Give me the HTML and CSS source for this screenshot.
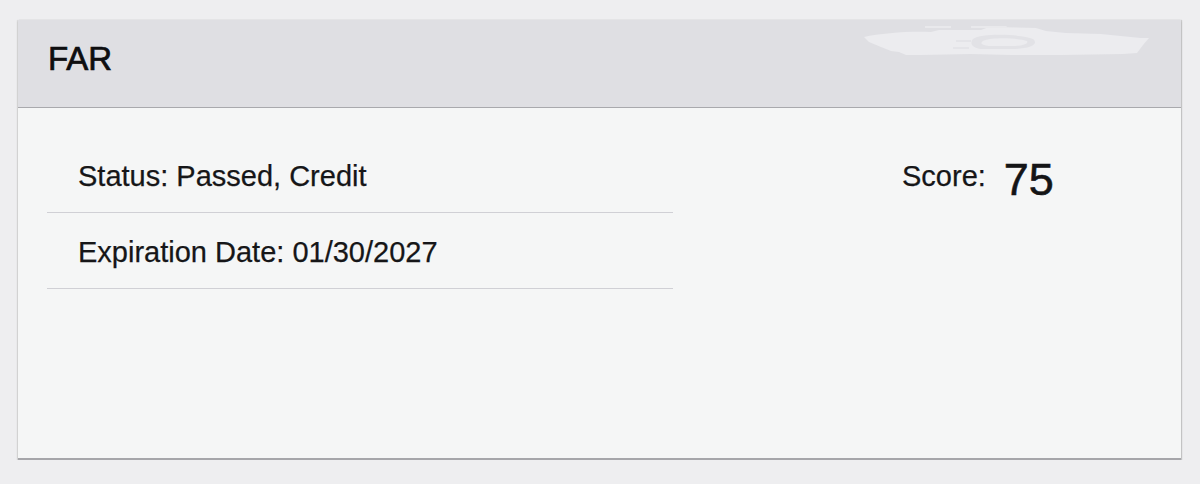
FILE: index.html
```html
<!DOCTYPE html>
<html lang="en">
<head>
<meta charset="utf-8">
<title>FAR</title>
<link rel="stylesheet" href="styles.css">
</head>
<body>
<div class="page">
  <section class="card">
    <header class="card-header">
      <h2 class="card-title">FAR</h2>
      <svg class="smudge" width="300" height="40" viewBox="0 0 300 40" aria-hidden="true">
        <path d="M3 12 C20 8 50 6 70 7 L78 5 L120 5 L128 2 L175 3 L185 6 L205 8 L240 9 L280 13 L288 13 L282 20 L276 28 L262 29 L200 30 L150 30 L110 29 L60 30 L45 30 L38 27 L30 26 L20 22 L8 17 Z" fill="#ececef"/>
        <path d="M64 1 L90 1 L90 3 L64 3 Z" fill="#e9e9ec"/>
        <path d="M110 1 L145 1 L148 3 L110 3 Z" fill="#e9e9ec"/>
        <path d="M112 14 C120 8 160 9 172 14 C178 19 170 24 150 24 L120 24 C112 23 108 19 112 14 Z" fill="#e2e2e6"/>
        <path d="M122 16 C130 12 158 13 166 16 C168 19 160 21 150 21 L128 21 C120 20 119 18 122 16 Z" fill="#ececef"/>
        <path d="M95 15 L110 15 L110 17 L95 17 Z" fill="#e4e4e8"/>
        <path d="M92 22 L108 22 L108 24 L92 24 Z" fill="#e4e4e8"/>
      </svg>
    </header>
    <div class="card-body">
      <ul class="details">
        <li class="detail-row">Status: Passed, Credit</li>
        <li class="detail-row">Expiration Date: 01/30/2027</li>
      </ul>
      <div class="score">
        <span class="score-label">Score:</span>
        <span class="score-value">75</span>
      </div>
    </div>
  </section>
</div>
</body>
</html>
```

FILE: styles.css
```css
* {
  box-sizing: border-box;
}

html, body {
  margin: 0;
  padding: 0;
  background: #eeeef0;
}

body {
  font-family: "Liberation Sans", Arial, sans-serif;
  color: #161618;
}

.page {
  padding: 20px 19px 0 18px;
}

.card {
  position: relative;
  width: 1163px;
  background: #f5f6f6;
  border-bottom: 2px solid #a6a6aa;
  box-shadow: 0 1px 2px rgba(0, 0, 0, 0.2), 1px 0 1px rgba(0, 0, 0, 0.12), -1px 0 1px rgba(0, 0, 0, 0.06);
}

.card-header {
  position: relative;
  height: 88px;
  background: #dfdfe3;
  border-bottom: 1px solid #a9a9ad;
  padding: 21px 30px 0 30px;
}

.card-title {
  margin: 0;
  font-size: 33px;
  line-height: 36px;
  font-weight: 400;
  color: #0e0e10;
  -webkit-text-stroke: 0.7px #0e0e10;
}

.smudge {
  position: absolute;
  left: 843px;
  top: 5px;
}

.card-body {
  display: flex;
  align-items: flex-start;
  height: 350px;
  padding: 28px 0 0 29px;
}

.details {
  list-style: none;
  margin: 0;
  padding: 0;
  width: 626px;
}

.detail-row {
  font-size: 29px;
  line-height: 33px;
  padding: 24px 0 19px 31px;
  border-bottom: 1px solid #d0d0d5;
  -webkit-text-stroke: 0.25px #161618;
}

.detail-row + .detail-row {
  padding-top: 23px;
  padding-bottom: 19px;
}

.score {
  display: flex;
  align-items: flex-start;
  gap: 18px;
  margin-left: 229px;
  padding-top: 24px;
}

.score-label {
  font-size: 29px;
  line-height: 33px;
  -webkit-text-stroke: 0.25px #161618;
}

.score-value {
  font-size: 45px;
  line-height: 44px;
  margin-top: -2px;
  color: #141416;
  -webkit-text-stroke: 0.6px #141416;
}
```
